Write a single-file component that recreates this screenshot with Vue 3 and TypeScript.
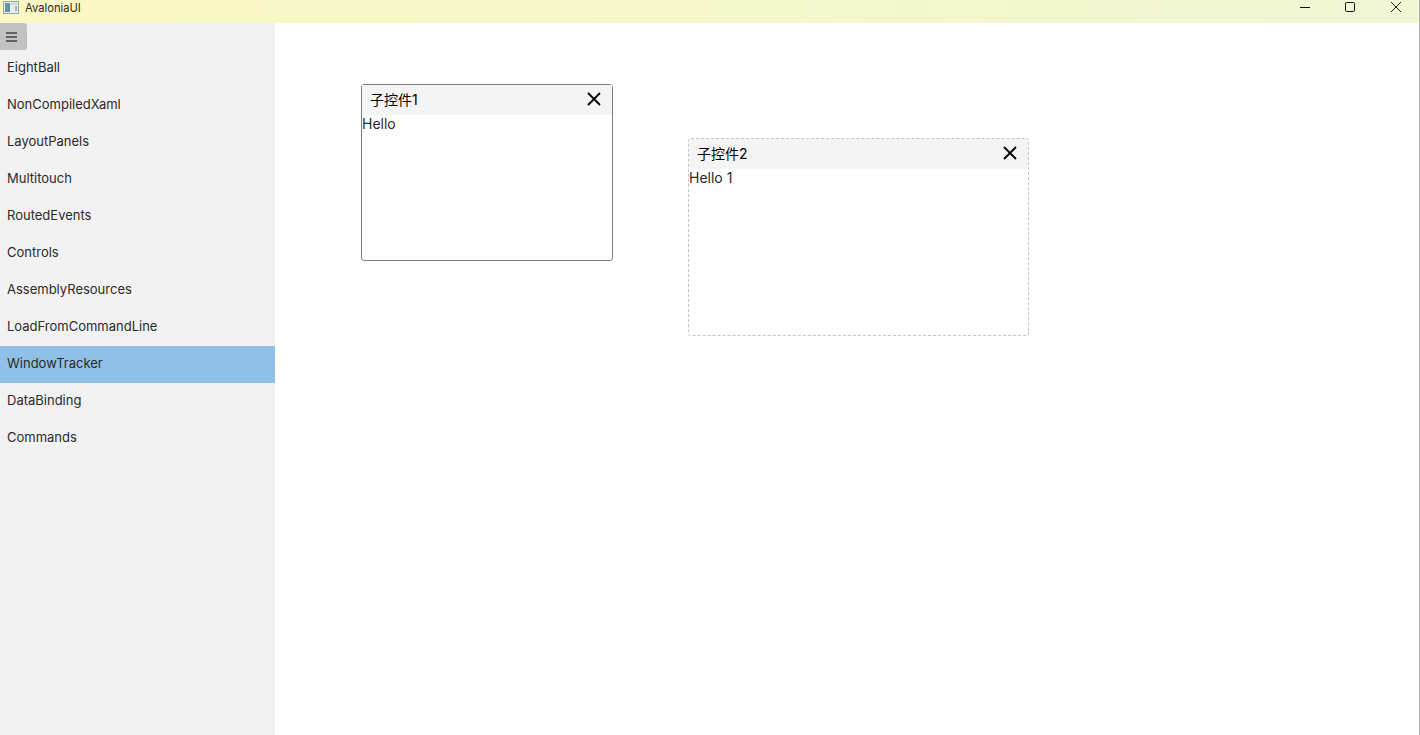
<script setup lang="ts">
const items: string[] = ['EightBall','NonCompiledXaml','LayoutPanels','Multitouch','RoutedEvents','Controls','AssemblyResources','LoadFromCommandLine','WindowTracker','DataBinding','Commands']
const selected = 'WindowTracker'
const panes = [
  { title: '子控件1', body: 'Hello', cls: 'one' },
  { title: '子控件2', body: 'Hello 1', cls: 'two' },
]
</script>

<template>
  <div class="app">
    <header class="titlebar">
      <div class="brand">
        <svg class="logo" width="16" height="13" viewBox="0 0 16 13">
          <rect x="0.5" y="0.5" width="15" height="12" fill="#e6ecec" stroke="#9aa3ab" />
          <rect x="2" y="2" width="5" height="9" fill="#6d9396" />
          <rect x="8" y="2" width="6" height="2" fill="#c9d6d8" />
          <rect x="12" y="5" width="2" height="5" fill="#9dbba6" />
        </svg>
        <span>AvaloniaUI</span>
      </div>
      <div class="caption">
        <svg width="12" height="12" viewBox="0 0 12 12"><path d="M1 6.5h10" stroke="#111" fill="none" /></svg>
        <svg width="12" height="12" viewBox="0 0 12 12"><rect x="1.5" y="1.5" width="9" height="9" rx="1.2" stroke="#111" fill="none" /></svg>
        <svg class="close" width="12" height="12" viewBox="0 0 12 12"><path d="M1 1l10 10M11 1L1 11" stroke="#222" fill="none" /></svg>
      </div>
    </header>
    <div class="body">
      <aside class="sidebar">
        <button class="burger" type="button" aria-label="menu">
          <svg width="11" height="10" viewBox="0 0 11 10"><path d="M0 1h11M0 5h11M0 9h11" stroke="#626262" stroke-width="2" fill="none" /></svg>
        </button>
        <ul class="nav">
          <li v-for="i in items" :key="i" :class="{ active: i === selected }">{{ i }}</li>
        </ul>
      </aside>
      <main class="canvas">
        <section v-for="p in panes" :key="p.title" class="pane" :class="p.cls">
          <div class="head">
            <span>{{ p.title }}</span>
            <svg width="14" height="14" viewBox="0 0 14 14"><path d="M1 1l12 12M13 1L1 13" stroke="#000" stroke-width="1.8" fill="none" /></svg>
          </div>
          <div class="text">{{ p.body }}</div>
        </section>
      </main>
    </div>
  </div>
</template>

<style>
html, body { margin: 0; background: #fff; overflow: hidden; }
</style>

<style scoped>
.app {
  box-sizing: border-box;
  width: 1420px;
  height: 735px;
  display: flex;
  flex-direction: column;
  border-right: 1px solid #b4b4b4;
  font-family: Inter, "Noto Sans CJK SC", sans-serif;
  color: #2a2a2a;
}
.titlebar {
  height: 23px;
  flex: none;
  display: flex;
  justify-content: space-between;
  background: linear-gradient(90deg, #fcf8c4, #f0f7d4);
}
.brand {
  display: flex;
  align-items: flex-start;
  gap: 6px;
  padding: 1px 0 0 3px;
  font-size: 11.2px;
  line-height: 14px;
  color: #2a2a2a;
}
.caption {
  display: flex;
  gap: 33px;
  padding: 1px 17px 0 0;
  align-items: flex-start;
}
.close { margin-left: 1px; }
.body { flex: 1; display: flex; min-height: 0; }
.sidebar {
  width: 275px;
  flex: none;
  background: #f2f2f2;
}
.burger {
  display: flex;
  align-items: center;
  padding: 0 0 0 6px;
  box-sizing: border-box;
  width: 27px;
  height: 27px;
  border: 0;
  border-radius: 0 3px 3px 0;
  background: #c2c2c2;
}
.nav { list-style: none; margin: 0; padding: 0; }
.nav li {
  box-sizing: border-box;
  height: 37px;
  line-height: 35px;
  padding-left: 7px;
  font-size: 13px;
}
.nav li.active { background: #90c0e8; }
.canvas { flex: 1; position: relative; background: #fff; }
.pane {
  position: absolute;
  box-sizing: border-box;
  border-radius: 3px;
  background: #fff;
}
.pane.one { left: 86px; top: 61px; width: 252px; height: 177px; border: 1px solid #7f7f7f; }
.pane.two { left: 413px; top: 115px; width: 341px; height: 198px; border: 1px dashed #c4c4c4; }
.head {
  box-sizing: border-box;
  height: 30px;
  display: flex;
  align-items: center;
  justify-content: space-between;
  padding: 0 11px 2px 8px;
  background: #f4f4f4;
  font-size: 14px;
  color: #000;
}
.text { font-size: 14px; line-height: 18px; }
</style>
